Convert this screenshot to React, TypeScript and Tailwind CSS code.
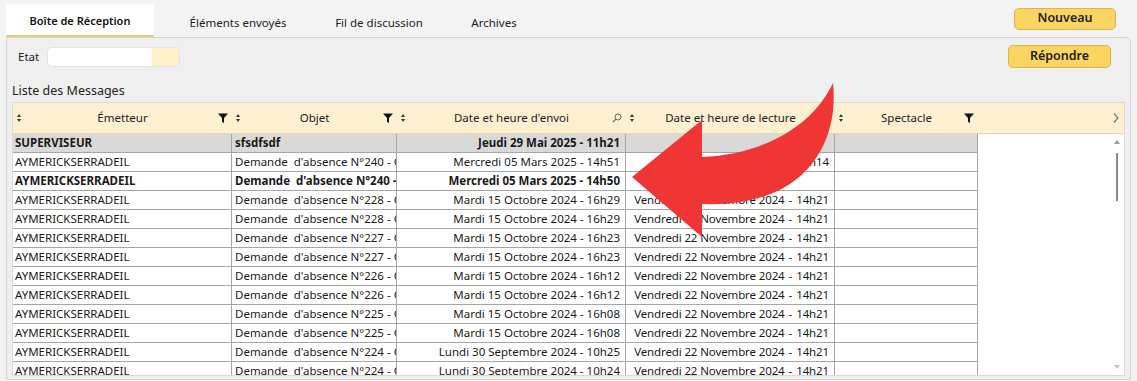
import React from "react";

type Row = { e: string; o: string; d: string; l: string; bold?: boolean; sel?: boolean };

const rows: Row[] = [
  { e: "SUPERVISEUR", o: "sfsdfsdf", d: "Jeudi 29 Mai 2025 - 11h21", l: "", bold: true, sel: true },
  { e: "AYMERICKSERRADEIL", o: "Demande  d'absence N°240 - Congés", d: "Mercredi 05 Mars 2025 - 14h51", l: "Jeudi 06 Mars 2025  -  09h14" },
  { e: "AYMERICKSERRADEIL", o: "Demande  d'absence N°240 - Congés", d: "Mercredi 05 Mars 2025 - 14h50", l: "", bold: true },
  { e: "AYMERICKSERRADEIL", o: "Demande  d'absence N°228 - Congés", d: "Mardi 15 Octobre 2024 - 16h29", l: "Vendredi 22 Novembre 2024  -  14h21" },
  { e: "AYMERICKSERRADEIL", o: "Demande  d'absence N°228 - Congés", d: "Mardi 15 Octobre 2024 - 16h29", l: "Vendredi 22 Novembre 2024  -  14h21" },
  { e: "AYMERICKSERRADEIL", o: "Demande  d'absence N°227 - Congés", d: "Mardi 15 Octobre 2024 - 16h23", l: "Vendredi 22 Novembre 2024  -  14h21" },
  { e: "AYMERICKSERRADEIL", o: "Demande  d'absence N°227 - Congés", d: "Mardi 15 Octobre 2024 - 16h23", l: "Vendredi 22 Novembre 2024  -  14h21" },
  { e: "AYMERICKSERRADEIL", o: "Demande  d'absence N°226 - Congés", d: "Mardi 15 Octobre 2024 - 16h12", l: "Vendredi 22 Novembre 2024  -  14h21" },
  { e: "AYMERICKSERRADEIL", o: "Demande  d'absence N°226 - Congés", d: "Mardi 15 Octobre 2024 - 16h12", l: "Vendredi 22 Novembre 2024  -  14h21" },
  { e: "AYMERICKSERRADEIL", o: "Demande  d'absence N°225 - Congés", d: "Mardi 15 Octobre 2024 - 16h08", l: "Vendredi 22 Novembre 2024  -  14h21" },
  { e: "AYMERICKSERRADEIL", o: "Demande  d'absence N°225 - Congés", d: "Mardi 15 Octobre 2024 - 16h08", l: "Vendredi 22 Novembre 2024  -  14h21" },
  { e: "AYMERICKSERRADEIL", o: "Demande  d'absence N°224 - Congés", d: "Lundi 30 Septembre 2024 - 10h25", l: "Vendredi 22 Novembre 2024  -  14h21" },
  { e: "AYMERICKSERRADEIL", o: "Demande  d'absence N°224 - Congés", d: "Lundi 30 Septembre 2024 - 10h24", l: "Vendredi 22 Novembre 2024  -  14h21" },
];

const SortIcon = () => (
  <svg width="4" height="8" viewBox="0 0 4 8">
    <path d="M2 0L4 3H0Z M2 8L0 5H4Z" fill="#333" />
  </svg>
);

const FilterIcon = () => (
  <svg width="10" height="10" viewBox="0 0 10 10">
    <path d="M0 0.5H10L6 5V10L4 8.8V5Z" fill="#111" />
  </svg>
);

const SearchIcon = () => (
  <svg width="10" height="10" viewBox="0 0 10 10">
    <circle cx="6" cy="4" r="3" stroke="#666" strokeWidth="1" fill="none" />
    <path d="M3.8 6.2L1 9" stroke="#666" strokeWidth="1.2" />
  </svg>
);

const HeadCell = ({ title, w, right }: { title: string; w: string; right: React.ReactNode }) => (
  <div className={`${w} flex items-center h-full px-[4px]`}>
    <div className="w-[10px] flex">
      <SortIcon />
    </div>
    <div className="flex-1 text-center text-[11.5px] text-[#222]">{title}</div>
    <div className="w-[10px] flex justify-end">{right}</div>
  </div>
);

// read date with the wide gap round the dash
const ReadDate = ({ text }: { text: string }) => {
  if (!text) return null;
  const [a, b] = text.split("  -  ");
  return (
    <>
      {a}
      <span className="px-[4px]">-</span>
      {b}
    </>
  );
};

export default function App() {
  return (
    <div className="relative w-[1137px] h-[381px] bg-[#f3f3f3] overflow-hidden font-['Noto_Sans',sans-serif] text-[#1a1a1a]">
      {/* Tab bar */}
      <div className="flex items-end h-[37px] pl-[6px] pr-[21px]">
        <div className="w-[148px] h-[33px] pt-[4px] bg-white border-b-2 border-[#e9cd7a] flex items-center justify-center text-[11px] font-semibold text-[#111]">
          Boîte de Réception
        </div>
        <div className="w-[168px] h-[33px] pt-[4px] flex items-center justify-center text-[11.5px] text-[#222]">Éléments envoyés</div>
        <div className="w-[114px] h-[33px] pt-[4px] flex items-center justify-center text-[11.5px] text-[#222]">Fil de discussion</div>
        <div className="w-[116px] h-[33px] pt-[4px] flex items-center justify-center text-[11.5px] text-[#222]">Archives</div>
        <button className="ml-auto self-center w-[102px] h-[22px] rounded-[5px] bg-[#fcd462] border border-[#d9b54c] text-[12.5px] font-semibold text-[#222] flex items-center justify-center">
          Nouveau
        </button>
      </div>

      {/* Panel */}
      <div className="ml-[6px] w-[1125px] h-[343px] bg-[#efefef] border border-[#d4d4d4] rounded-tr-[5px] flex flex-col">
        <div className="flex items-center justify-between pt-[7px] pl-[11px] pr-[19px]">
          <div className="flex items-center">
            <span className="w-[29px] text-[11.5px] text-[#222]">Etat</span>
            <div className="w-[133px] h-[20px] rounded-[5px] bg-white border border-[#e3e3e3] flex justify-end overflow-hidden">
              <div className="w-[27px] h-full bg-[#fdf0c9]" />
            </div>
          </div>
          <button className="w-[103px] h-[23px] rounded-[5px] bg-[#fcd462] border border-[#d9b54c] text-[12.5px] font-semibold text-[#222] flex items-center justify-center">
            Répondre
          </button>
        </div>

        <div className="mt-[12px] pl-[5px] h-[20px] leading-[21px] text-[12.5px] text-[#222]">Liste des Messages</div>

        {/* Table */}
        <div className="mt-[2px] ml-[5px] w-[1113px] h-[274px] border border-[#dadada] bg-white flex flex-col overflow-hidden">
          <div className="h-[31px] flex bg-[#fdf0d0] border-b border-[#ecd9a2] shrink-0">
            <HeadCell title="Émetteur" w="w-[219px]" right={<FilterIcon />} />
            <HeadCell title="Objet" w="w-[165px]" right={<FilterIcon />} />
            <HeadCell title="Date et heure d'envoi" w="w-[229px]" right={<SearchIcon />} />
            <HeadCell title="Date et heure de lecture" w="w-[209px]" right={<FilterIcon />} />
            <HeadCell title="Spectacle" w="w-[143px]" right={<FilterIcon />} />
            <div className="flex-1 flex items-center justify-end pr-[4px]">
              <svg width="8" height="12" viewBox="0 0 8 12">
                <path d="M2 1.5L6 6L2 10.5" stroke="#777" strokeWidth="1.2" fill="none" />
              </svg>
            </div>
          </div>

          <div className="flex flex-1 min-h-0">
            <div className="flex flex-col overflow-hidden">
              {rows.map((r, i) => (
                <div
                  key={i}
                  className={`flex h-[19px] shrink-0 text-[11.5px] leading-[18px] ${r.bold ? "font-bold" : ""} ${
                    r.sel ? "bg-[#d9d9d9]" : "bg-white"
                  }`}
                >
                  <div className="w-[219px] pl-[2px] border-r border-b border-[#a6a6a6] overflow-hidden whitespace-pre">{r.e}</div>
                  <div className="w-[165px] pl-[3px] border-r border-b border-[#a6a6a6] overflow-hidden whitespace-pre">{r.o}</div>
                  <div className="w-[229px] pr-[5px] text-right border-r border-b border-[#a6a6a6] overflow-hidden whitespace-pre">{r.d}</div>
                  <div className="w-[209px] pr-[5px] text-right font-normal tracking-[-0.12px] border-r border-b border-[#a6a6a6] overflow-hidden whitespace-pre">
                    <ReadDate text={r.l} />
                  </div>
                  <div className="w-[143px] border-r border-b border-[#a6a6a6]" />
                </div>
              ))}
            </div>
            <div className="flex-1" />
            {/* Scrollbar */}
            <div className="w-[15px] flex flex-col items-center pt-[6px] pb-[6px]">
              <svg width="6" height="4" viewBox="0 0 6 4">
                <path d="M3 0L6 4H0Z" fill="#9a9a9a" />
              </svg>
              <div className="mt-[9px] w-[2px] h-[48px] bg-[#8a8a8a]" />
              <div className="flex-1" />
              <svg width="6" height="4" viewBox="0 0 6 4">
                <path d="M0 0H6L3 4Z" fill="#c4c4c4" />
              </svg>
            </div>
          </div>
        </div>
      </div>

      {/* Red annotation arrow */}
      <svg className="absolute left-0 top-0 pointer-events-none" width="1137" height="381" viewBox="0 0 1137 381">
        <path
          d="M632 177 L702 120 L702 157 C760 155 812 128 833 83 C838 130 818 178 765 196 C745 203 722 205 702 204 L702 237 Z"
          fill="#f03535"
        />
      </svg>
    </div>
  );
}
